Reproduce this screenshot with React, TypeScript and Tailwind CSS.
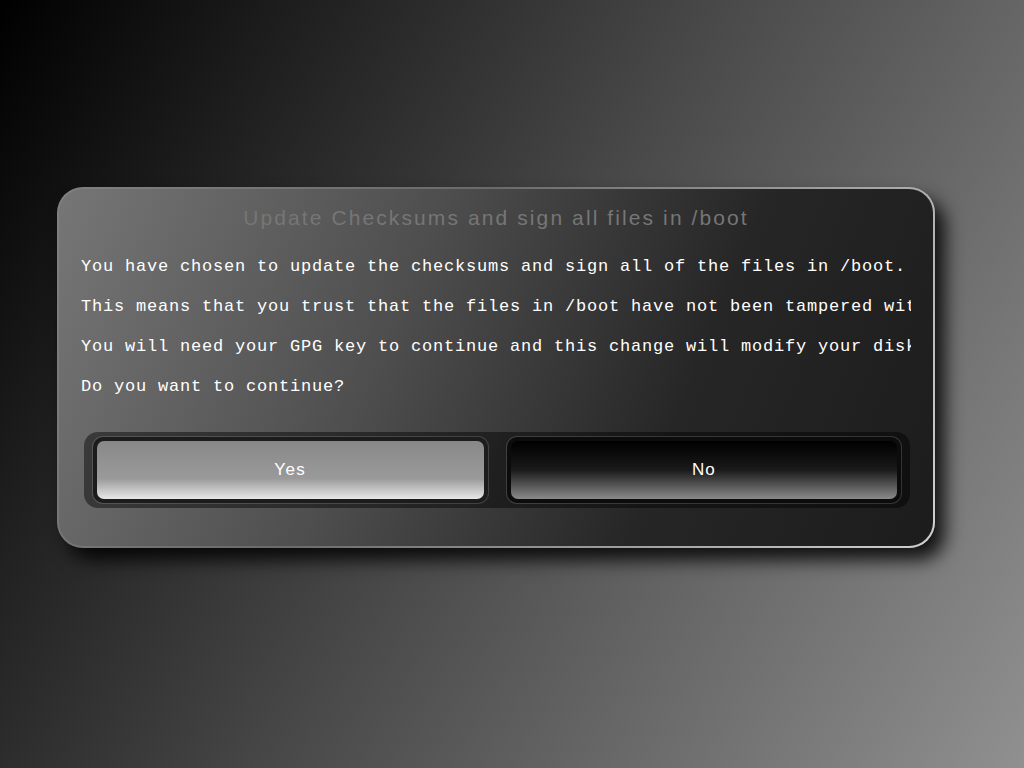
export default function App() {
  const lines = [
    "You have chosen to update the checksums and sign all of the files in /boot.",
    "This means that you trust that the files in /boot have not been tampered with.",
    "You will need your GPG key to continue and this change will modify your disk.",
    "Do you want to continue?",
  ];

  return (
    <div className="w-full h-[768px] overflow-hidden bg-[linear-gradient(120deg,#000000_0%,#4a4a4a_50%,#909090_100%)] pt-[187px] pl-[57px]">
      {/* dialog: outer div is the gradient border */}
      <div className="w-[878px] h-[361px] rounded-[26px] p-[2px] bg-[linear-gradient(120deg,#808080_0%,#6a6a6a_40%,#d0d0d0_100%)] shadow-[10px_12px_18px_rgba(0,0,0,0.85)]">
        <div className="w-full h-full rounded-[24px] bg-[linear-gradient(112deg,#767676_0%,#4e4e4e_38%,#262626_70%,#1c1c1c_100%)] px-[22px] pt-[14px] flex flex-col">
          <h1
            className="text-center text-[21px] leading-[30px] tracking-[2.1px] text-[#767676]"
            style={{ fontFamily: '"Liberation Sans", Arial, sans-serif' }}
          >
            Update Checksums and sign all files in /boot
          </h1>

          <div
            className="mt-[14px] w-[830px] overflow-hidden whitespace-nowrap text-white text-[17px] leading-[40px] tracking-[0.8px]"
            style={{ fontFamily: '"Liberation Mono", "DejaVu Sans Mono", monospace' }}
          >
            {lines.map((l) => (
              <div key={l}>{l}</div>
            ))}
          </div>

          <div className="mt-[25px] ml-[3px] w-[826px] h-[76px] rounded-[14px] bg-black/45 px-[9px] py-[5px] flex gap-[19px]">
            <button className="flex-1 rounded-[10px] bg-[#1c1c1c] p-[4px] ring-1 ring-white/15">
              <div
                className="w-full h-full rounded-[7px] bg-[linear-gradient(180deg,#888888_0%,#9a9a9a_65%,#e8e8e8_100%)] flex items-center justify-center text-white text-[17px] tracking-[1.5px]"
                style={{ fontFamily: '"Liberation Sans", Arial, sans-serif' }}
              >
                Yes
              </div>
            </button>
            <button className="flex-1 rounded-[10px] bg-[#0c0c0c] p-[4px] ring-1 ring-white/15">
              <div
                className="w-full h-full rounded-[7px] bg-[linear-gradient(180deg,#000000_0%,#1a1a1a_50%,#8a8a8a_100%)] flex items-center justify-center text-white text-[17px] tracking-[1px]"
                style={{ fontFamily: '"Liberation Sans", Arial, sans-serif' }}
              >
                No
              </div>
            </button>
          </div>
        </div>
      </div>
    </div>
  );
}
